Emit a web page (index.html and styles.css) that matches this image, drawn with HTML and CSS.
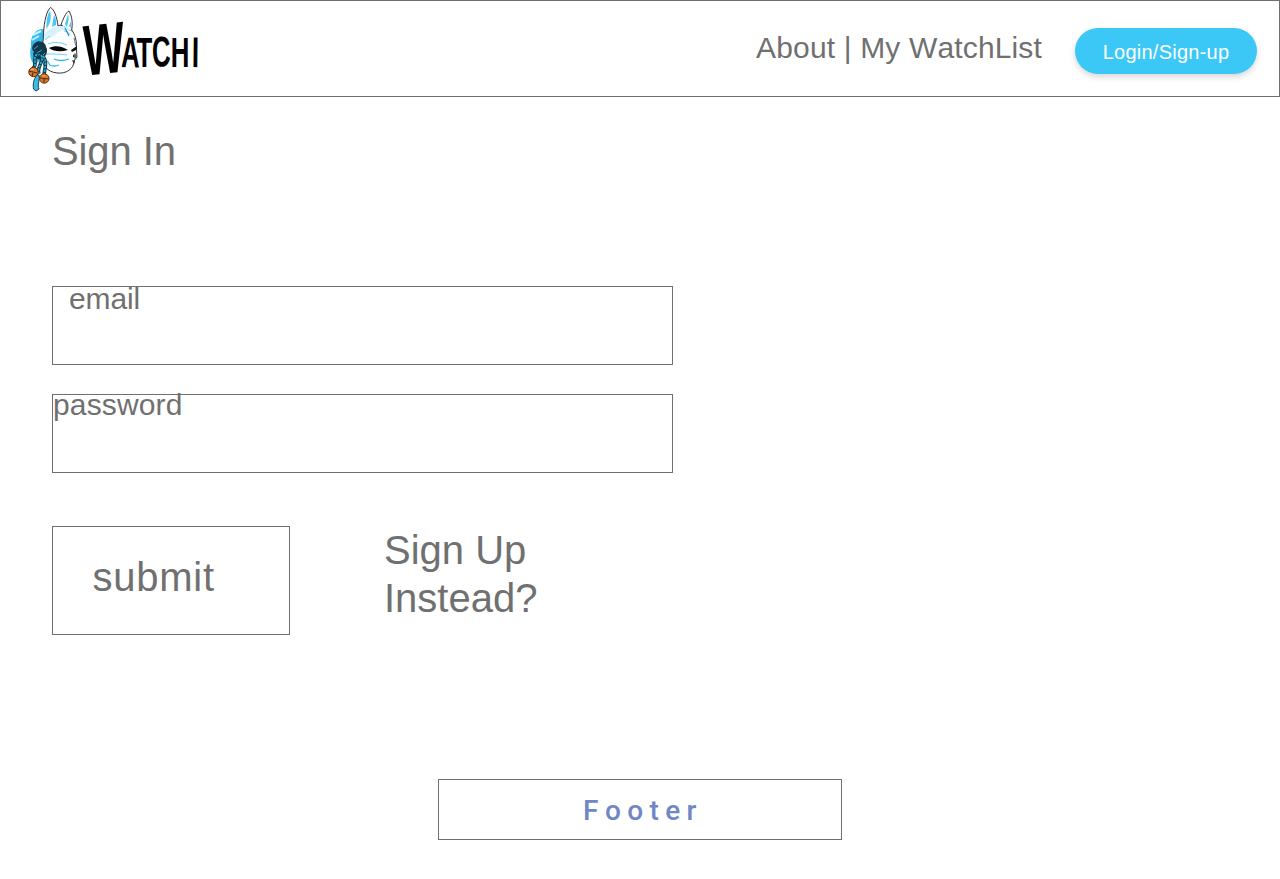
FILE: index.html
```html
<!DOCTYPE html>
<html lang="en">
<head>
<meta charset="utf-8">
<title>Watchi - Sign In</title>
<link rel="stylesheet" href="styles.css">
</head>
<body>
<header class="header">
  <svg class="logo" viewBox="20 0 190 95" role="img" aria-label="Watchi">
    <path d="M45 29C35 28 30 36 31 47C29 54 31 61 34 65L47 56Z" fill="#32b9ed"/>
    <path d="M33 35L41 31M32 40L39 36" stroke="#c9f1ff" stroke-width="2"/>
    <path d="M43.500 34C44 21 47 10 50.500 7.500C54 9 57 17 58 26C62 24 66 26 71 29C75 34 77 41 76.500 49L77 57L74 61C74 69 66 74 57 73C48 72 42 66 42 57Z" fill="#fff" stroke="#333" stroke-width="1"/>
    <path d="M61 25C63 19 66 12 69 11C72 16 73 23 71.500 31Z" fill="#fff" stroke="#333" stroke-width="1"/>
    <path d="M46.500 29C46 20 48 13 50 11C52 18 50 24 46.500 29ZM54 15C56 18 56.500 22 56 25L52 27ZM65 24L68 14C69.500 18 68 22 67 27ZM71 21V28L69 26Z" fill="#49c6f4"/>
    <path d="M44 34C49 29 54 26 61 26C66 26 69 27 72 31C65 29 59 30 55 35C50 39 46 37 44 40Z" fill="#d7f2fc"/>
    <path d="M64 31C67 31 69 33 70 35M45 40L50 36M48 44C55 41 62 43 67 45M46 54C53 54 61 54 67 55" fill="none" stroke="#6fcff3" stroke-width="1"/>
    <path d="M47 61Q49 62 49.500 65Q54 67 59 65M54 59Q61 62 69 59" fill="none" stroke="#32b9ed" stroke-width="1.300"/>
    <path d="M65 28L67 32L69 36" fill="none" stroke="#199bd1" stroke-width="1.300"/>
    <path d="M49 48C55 45 62 46 68 50C61 52 54 52 49 48ZM71 50L77 46L76 50L72 52Z" fill="#080b0d"/>
    <path d="M73 55C76 53 77 55 76 58L73 57ZM72 60L75 61L74 64" fill="#272525"/>
    <path d="M74 38L76 46M75 53V60" stroke="#7b878b" stroke-width="1.200"/>
    <path d="M35 43C39 39 46 43 46 47C49 51 45 58 42 59C36 61 31 55 34 52C31 49 32 45 35 43Z" fill="#12394a"/>
    <path d="M34 49L38 46M37 53L42 50M36 57L40 54M42 56L45 53" stroke="#31a5d2" stroke-width="1"/>
    <path d="M37 54C32 59 38 63 33 69M41 55C45 61 36 67 39 74M43 56C48 63 44 69 44 76" fill="none" stroke="#12394a" stroke-width="3.600"/>
    <path d="M37 54C32 59 38 63 33 69M41 55C45 61 36 67 39 74M43 56C48 63 44 69 44 76" fill="none" stroke="#2caad6" stroke-width="1.700" stroke-dasharray="2.500 1"/>
    <path d="M37 75C33 80 33 85 33.500 89L36 91L39 89C37 85 40 81 39 75Z" fill="#39bce8" stroke="#164354" stroke-width="1"/>
    <circle cx="33.500" cy="72" r="4.700" fill="#df7b25" stroke="#5a2b12"/>
    <circle cx="44.300" cy="78.500" r="4.700" fill="#df7b25" stroke="#5a2b12"/>
    <path d="M29 71L37 73M33 73L32 76M40 78L49 79M44 79V82" stroke="#5a2b12" stroke-width="1.200"/>
    <path d="M31 69.500L34 69M42 76L45 75.500" stroke="#ffb566" stroke-width="1"/>
    <text class="wordmark" transform="translate(82 76) scale(.6 1)"><tspan class="wordmark-initial" x="4" rotate="-4">W</tspan><tspan x="65 91 117 148 183" y="-9" rotate="1 0 -2 0 1">ATCHI</tspan></text>
  </svg>
  <nav class="nav">About | My WatchList</nav>
  <a class="login">Login/Sign-up</a>
</header>
<main class="main">
  <h1 class="title">Sign In</h1>
  <form class="form">
    <div class="field field-email">email</div>
    <div class="field field-password">password</div>
    <div class="actions">
      <div class="submit">submit</div>
      <a class="switch">Sign Up<br>Instead?</a>
    </div>
  </form>
</main>
<footer class="footer">Footer</footer>
</body>
</html>
```
FILE: styles.css
```css
* { box-sizing: border-box; }
body {
  margin: 0;
  height: 879px;
  background: #fff;
  color: #707070;
  font-family: "Liberation Sans", Arial, sans-serif;
  font-kerning: none;
}
.header {
  display: flex;
  align-items: flex-start;
  height: 97px;
  padding-right: 22px;
  border: 1px solid #707070;
}
.logo { width: 190px; height: 95px; margin: -1px 0 0 19px; }
.wordmark {
  font-family: "Liberation Sans", Arial, sans-serif;
  font-size: 43px;
  font-weight: 700;
  fill: #000;
}
.wordmark-initial { font-size: 72px; }
.nav {
  margin: 29px 33px 0 auto;
  font-size: 30px;
  line-height: 36px;
  letter-spacing: .15px;
  white-space: nowrap;
}
.login {
  width: 182px;
  height: 46px;
  margin-top: 27px;
  border-radius: 23px;
  background: #3cc8f7;
  box-shadow: 0 3px 6px rgba(0, 0, 0, .16);
  color: #fff;
  font-size: 20px;
  line-height: 48px;
  letter-spacing: .25px;
  text-align: center;
}
.main { padding: 30px 52px 0; }
.title {
  margin: 0 0 111px;
  font-size: 40px;
  font-weight: 400;
  line-height: 48px;
  letter-spacing: -.1px;
}
.field {
  width: 621px;
  height: 79px;
  border: 1px solid #707070;
  font-size: 30px;
}
.field-email { padding-left: 16px; line-height: 24px; letter-spacing: -.1px; }
.field-password { margin-top: 29px; line-height: 20px; letter-spacing: .15px; }
.actions {
  display: flex;
  gap: 94px;
  margin-top: 53px;
  font-size: 40px;
  line-height: 48px;
}
.submit {
  width: 238px;
  height: 109px;
  padding: 26px 0 0 39.5px;
  border: 1px solid #707070;
  letter-spacing: .75px;
}
.footer {
  width: 404px;
  height: 61px;
  margin: 144px auto 0;
  padding-left: 6px;
  border: 1px solid #707070;
  color: #6f87c5;
  font-family: Roboto, sans-serif;
  font-size: 28px;
  font-weight: 500;
  line-height: 61px;
  letter-spacing: 6.4px;
  text-align: center;
}
```
